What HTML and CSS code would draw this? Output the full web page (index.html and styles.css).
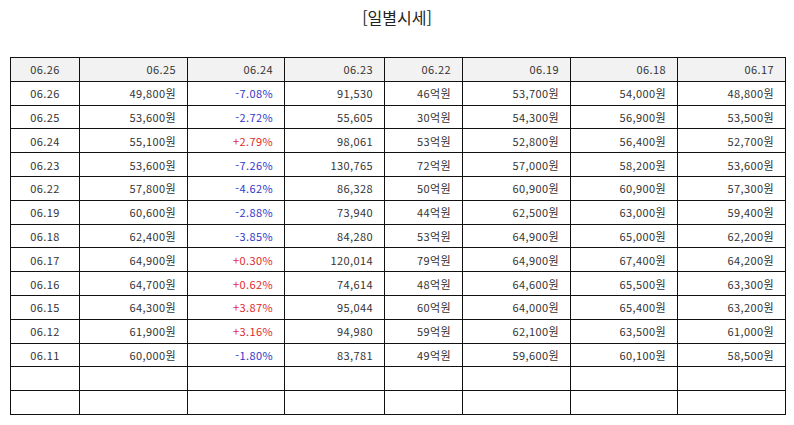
FILE: index.html
```html
<!DOCTYPE html>
<html lang="ko">
<head>
<meta charset="utf-8">
<link rel="stylesheet" href="styles.css">
</head>
<body>
<div class="title">[일별시세]</div>
<table class="grid">
<colgroup>
<col class="c1"><col class="c2"><col class="c3"><col class="c4"><col class="c5"><col class="c6"><col class="c7"><col class="c8">
</colgroup>
<thead>
<tr><th class="ctr">06.26</th><th>06.25</th><th>06.24</th><th>06.23</th><th>06.22</th><th>06.19</th><th>06.18</th><th>06.17</th></tr>
</thead>
<tbody>
<tr><td class="ctr">06.26</td><td>49,800원</td><td class="dn">-7.08%</td><td>91,530</td><td>46억원</td><td>53,700원</td><td>54,000원</td><td>48,800원</td></tr>
<tr><td class="ctr">06.25</td><td>53,600원</td><td class="dn">-2.72%</td><td>55,605</td><td>30억원</td><td>54,300원</td><td>56,900원</td><td>53,500원</td></tr>
<tr><td class="ctr">06.24</td><td>55,100원</td><td class="up">+2.79%</td><td>98,061</td><td>53억원</td><td>52,800원</td><td>56,400원</td><td>52,700원</td></tr>
<tr><td class="ctr">06.23</td><td>53,600원</td><td class="dn">-7.26%</td><td>130,765</td><td>72억원</td><td>57,000원</td><td>58,200원</td><td>53,600원</td></tr>
<tr><td class="ctr">06.22</td><td>57,800원</td><td class="dn">-4.62%</td><td>86,328</td><td>50억원</td><td>60,900원</td><td>60,900원</td><td>57,300원</td></tr>
<tr><td class="ctr">06.19</td><td>60,600원</td><td class="dn">-2.88%</td><td>73,940</td><td>44억원</td><td>62,500원</td><td>63,000원</td><td>59,400원</td></tr>
<tr><td class="ctr">06.18</td><td>62,400원</td><td class="dn">-3.85%</td><td>84,280</td><td>53억원</td><td>64,900원</td><td>65,000원</td><td>62,200원</td></tr>
<tr><td class="ctr">06.17</td><td>64,900원</td><td class="up">+0.30%</td><td>120,014</td><td>79억원</td><td>64,900원</td><td>67,400원</td><td>64,200원</td></tr>
<tr><td class="ctr">06.16</td><td>64,700원</td><td class="up">+0.62%</td><td>74,614</td><td>48억원</td><td>64,600원</td><td>65,500원</td><td>63,300원</td></tr>
<tr><td class="ctr">06.15</td><td>64,300원</td><td class="up">+3.87%</td><td>95,044</td><td>60억원</td><td>64,000원</td><td>65,400원</td><td>63,200원</td></tr>
<tr><td class="ctr">06.12</td><td>61,900원</td><td class="up">+3.16%</td><td>94,980</td><td>59억원</td><td>62,100원</td><td>63,500원</td><td>61,000원</td></tr>
<tr><td class="ctr">06.11</td><td>60,000원</td><td class="dn">-1.80%</td><td>83,781</td><td>49억원</td><td>59,600원</td><td>60,100원</td><td>58,500원</td></tr>
<tr><td></td><td></td><td></td><td></td><td></td><td></td><td></td><td></td></tr>
<tr><td></td><td></td><td></td><td></td><td></td><td></td><td></td><td></td></tr>
</tbody>
</table>
</body>
</html>
```
FILE: styles.css
```css
html, body {
  margin: 0;
  padding: 0;
  background: #ffffff;
}
body {
  font-family: "Noto Sans CJK KR", "Noto Sans", sans-serif;
  color: #333333;
}
.title {
  height: 34px;
  line-height: 34px;
  font-size: 16px;
  text-align: center;
  color: #222222;
  margin-bottom: 23px;
}
.grid {
  margin-left: 10px;
  width: 776px;
  border-collapse: collapse;
  table-layout: fixed;
  font-size: 11px;
  letter-spacing: 0.4px;
}
.c1 { width: 69px; }
.c2 { width: 108px; }
.c3 { width: 97px; }
.c4 { width: 100px; }
.c5 { width: 78px; }
.c6 { width: 108px; }
.c7 { width: 107px; }
.c8 { width: 108px; }
.grid th,
.grid td {
  border: 1px solid #111111;
  height: 22.8px;
  padding: 0 11px 0 4px;
  text-align: right;
  font-weight: normal;
  line-height: 14px;
  white-space: nowrap;
}
.grid thead th {
  background: #f2f2f2;
}
.grid .ctr {
  text-align: center;
  padding: 0;
}
.dn { color: #3434c8; }
.up { color: #e02a2a; }
```
